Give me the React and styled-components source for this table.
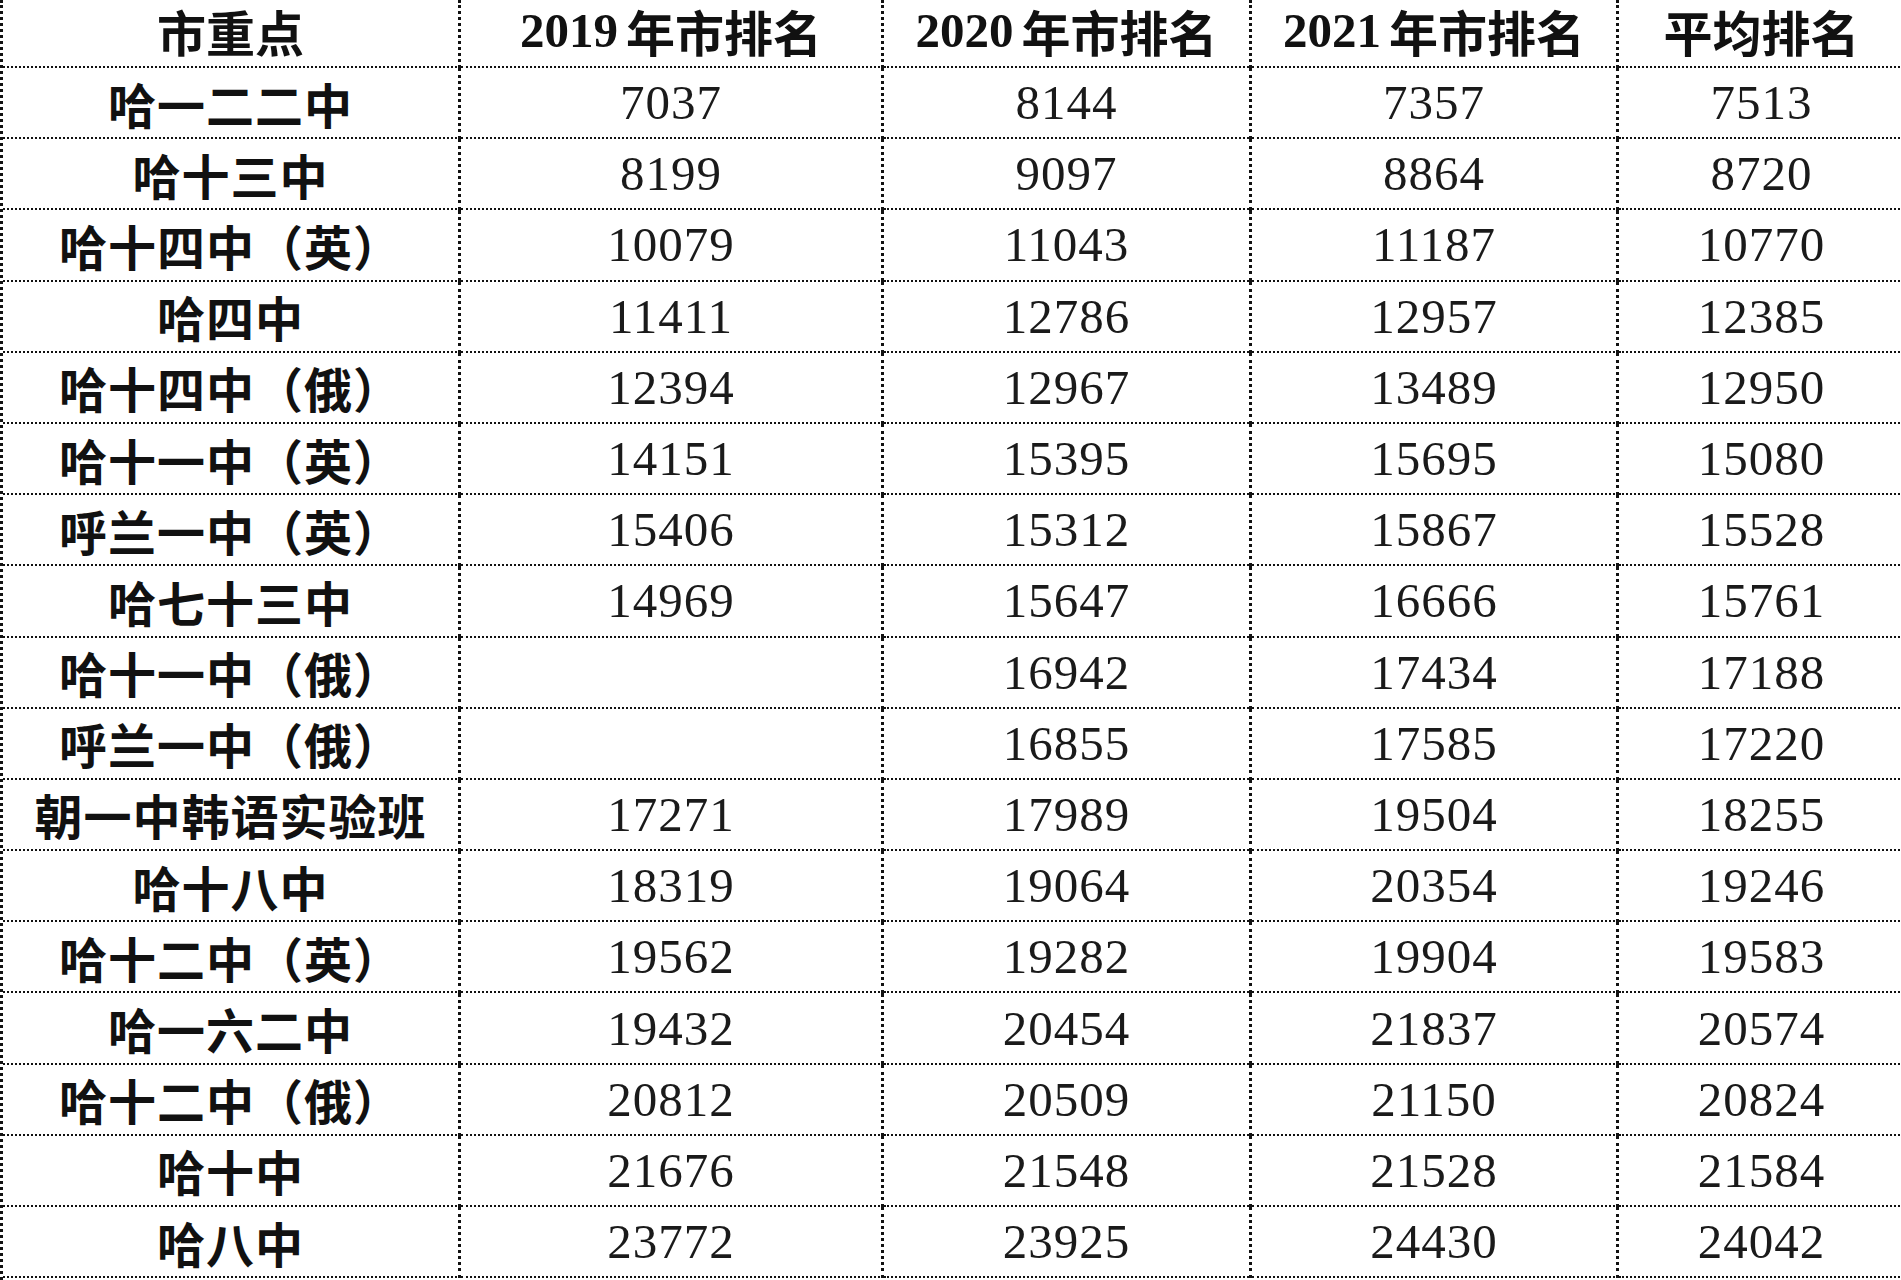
import React from 'react'
import styled, { createGlobalStyle } from 'styled-components'

const GlobalStyle = createGlobalStyle`
  html, body {
    margin: 0;
    padding: 0;
    background: #fff;
  }
  body {
    font-family: "Liberation Serif", "Noto Sans CJK SC", serif;
    color: #111;
  }
`

const Sheet = styled.div`
  display: grid;
  grid-template-columns: 458px 423px 368px 367px 285px;
  grid-template-rows: 68px repeat(17, 71.2px);
  width: 1901px;
  height: 1280px;
  overflow: hidden;
  border-left: 3px dotted #111;
  box-sizing: border-box;
  background: #fff;
`

const Cell = styled.div`
  display: flex;
  align-items: center;
  justify-content: center;
  box-sizing: border-box;
  border-bottom: 2px dotted #111;
  border-right: ${p => (p.$last ? 'none' : '3px dotted #111')};
  white-space: nowrap;
  overflow: hidden;
`

const HeadCell = styled(Cell)`
  font-family: "Liberation Serif", "Noto Sans CJK SC", serif;
  font-weight: 700;
  font-size: 49px;
  color: #111;
  padding-bottom: 6px;

  span {
    margin-right: 8px;
  }
`

const NameCell = styled(Cell)`
  font-family: "Noto Sans CJK SC", sans-serif;
  font-weight: 700;
  font-size: 48px;
  color: #111;
  letter-spacing: 1px;
`

const NumCell = styled(Cell)`
  font-family: "Liberation Serif", serif;
  font-size: 49px;
  color: #1a1a1a;
  letter-spacing: 1px;
`

const headers = [
  { year: null, label: '市重点' },
  { year: '2019', label: '年市排名' },
  { year: '2020', label: '年市排名' },
  { year: '2021', label: '年市排名' },
  { year: null, label: '平均排名' },
]

const rows = [
  ['哈一二二中', '7037', '8144', '7357', '7513'],
  ['哈十三中', '8199', '9097', '8864', '8720'],
  ['哈十四中（英）', '10079', '11043', '11187', '10770'],
  ['哈四中', '11411', '12786', '12957', '12385'],
  ['哈十四中（俄）', '12394', '12967', '13489', '12950'],
  ['哈十一中（英）', '14151', '15395', '15695', '15080'],
  ['呼兰一中（英）', '15406', '15312', '15867', '15528'],
  ['哈七十三中', '14969', '15647', '16666', '15761'],
  ['哈十一中（俄）', '', '16942', '17434', '17188'],
  ['呼兰一中（俄）', '', '16855', '17585', '17220'],
  ['朝一中韩语实验班', '17271', '17989', '19504', '18255'],
  ['哈十八中', '18319', '19064', '20354', '19246'],
  ['哈十二中（英）', '19562', '19282', '19904', '19583'],
  ['哈一六二中', '19432', '20454', '21837', '20574'],
  ['哈十二中（俄）', '20812', '20509', '21150', '20824'],
  ['哈十中', '21676', '21548', '21528', '21584'],
  ['哈八中', '23772', '23925', '24430', '24042'],
]

export default function App() {
  return (
    <>
      <GlobalStyle />
      <Sheet>
        {headers.map((h, i) => (
          <HeadCell key={'h' + i} $last={i === headers.length - 1}>
            {h.year && <span>{h.year}</span>}
            {h.label}
          </HeadCell>
        ))}
        {rows.map((r, ri) =>
          r.map((v, ci) =>
            ci === 0 ? (
              <NameCell key={ri + '-' + ci}>{v}</NameCell>
            ) : (
              <NumCell key={ri + '-' + ci} $last={ci === r.length - 1}>
                {v}
              </NumCell>
            )
          )
        )}
      </Sheet>
    </>
  )
}
